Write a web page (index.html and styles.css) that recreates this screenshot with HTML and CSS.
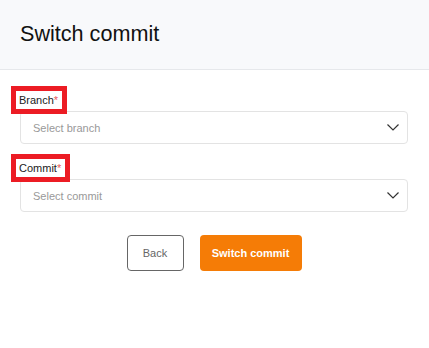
FILE: index.html
```html
<!DOCTYPE html>
<html>
<head>
<meta charset="utf-8">
<link rel="stylesheet" href="styles.css">
</head>
<body>
<div class="modal">
  <header class="modal-header">
    <h1 class="modal-title">Switch commit</h1>
  </header>
  <div class="modal-body">
    <div class="field">
      <label class="field-label">Branch<span class="req">*</span></label>
      <div class="select">
        <span class="placeholder">Select branch</span>
        <svg class="chevron" width="12" height="7" viewBox="0 0 12 7"><path d="M0.5 0.5 L6 6 L11.5 0.5" fill="none" stroke="#333" stroke-width="1.2"/></svg>
      </div>
    </div>
    <div class="field">
      <label class="field-label">Commit<span class="req">*</span></label>
      <div class="select">
        <span class="placeholder">Select commit</span>
        <svg class="chevron" width="12" height="7" viewBox="0 0 12 7"><path d="M0.5 0.5 L6 6 L11.5 0.5" fill="none" stroke="#333" stroke-width="1.2"/></svg>
      </div>
    </div>
    <div class="actions">
      <button class="btn btn-back">Back</button>
      <button class="btn btn-primary">Switch commit</button>
    </div>
  </div>
</div>
</body>
</html>
```
FILE: styles.css
```css
* { box-sizing: border-box; }
html, body { margin: 0; padding: 0; background: #fff; }
body { font-family: "Liberation Sans", Arial, sans-serif; color: #1a1a1a; }
.modal-header {
  height: 70px;
  background: #f8f9fb;
  border-bottom: 1px solid #e6e8eb;
  display: flex;
  align-items: center;
  padding: 0 20px;
}
.modal-title {
  margin: 0;
  font-weight: 400;
  font-size: 21.6px;
  color: #111;
  padding-bottom: 2px;
}
.modal-body {
  padding: 16px 21px 0 11px;
}
.field { display: flex; flex-direction: column; align-items: flex-start; margin-bottom: 10px; }
.field-label {
  display: inline-flex;
  align-items: center;
  border: 5px solid #ec1c24;
  height: 28px;
  padding: 0 4px 0 3px;
  font-size: 11px;
  color: #222;
  background: #fff;
  position: relative;
  z-index: 1;
}
.req { color: #e85a5a; }
.select {
  margin-left: 9px;
  margin-top: -3px;
  width: 388px;
  height: 33px;
  border: 1px solid #e3e3e3;
  border-radius: 4px;
  display: flex;
  align-items: center;
  justify-content: space-between;
  padding: 0 8px 0 12px;
  font-size: 11px;
}
.placeholder { color: #999; }
.actions {
  display: flex;
  justify-content: center;
  gap: 16px;
  margin-top: 23px;
  padding-left: 9px;
}
.btn {
  font-family: "Liberation Sans", Arial, sans-serif;
  font-size: 11px;
  height: 36px;
  border-radius: 4px;
  cursor: pointer;
}
.btn-back {
  width: 57px;
  background: #fff;
  border: 1px solid #666;
  color: #666;
}
.btn-primary {
  width: 102px;
  background: #f57c06;
  border: none;
  color: #fff;
  font-weight: 700;
}
```
